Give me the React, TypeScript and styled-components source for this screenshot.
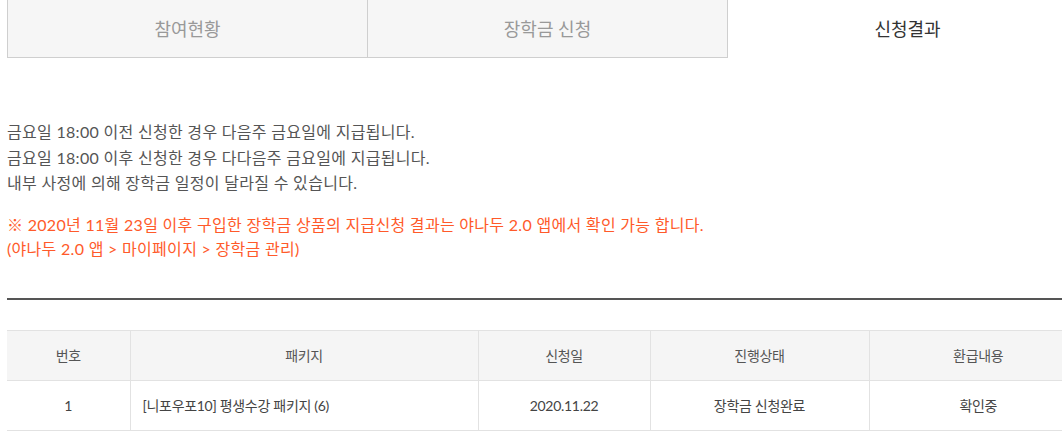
import React from "react";
import styled, { createGlobalStyle } from "styled-components";

const GlobalStyle = createGlobalStyle`
  html, body {
    margin: 0;
    padding: 0;
    background: #fff;
    overflow: hidden;
  }
  body {
    font-family: "Lato", "Noto Sans CJK KR", sans-serif;
    color: #555;
  }
`;

interface Row {
  no: number;
  pkg: string;
  date: string;
  status: string;
  refund: string;
}

const TABS = ["참여현황", "장학금 신청", "신청결과"];
const ACTIVE_TAB = 2;

const COLUMNS = [
  { label: "번호", width: 123 },
  { label: "패키지", width: 348 },
  { label: "신청일", width: 172 },
  { label: "진행상태", width: 219 },
  { label: "환급내용", width: 218 },
];

const ROWS: Row[] = [
  {
    no: 1,
    pkg: "[니포우포10] 평생수강 패키지 (6)",
    date: "2020.11.22",
    status: "장학금 신청완료",
    refund: "확인중",
  },
];

const App: React.FC = () => {
  return (
    <>
      <GlobalStyle />
      <Page>
        <TabBar>
          {TABS.map((tab, i) => (
            <Tab key={tab} active={i === ACTIVE_TAB} first={i === 0}>
              {tab}
            </Tab>
          ))}
        </TabBar>

        <Notice>
          <p>금요일 18:00 이전 신청한 경우 다음주 금요일에 지급됩니다.</p>
          <p>금요일 18:00 이후 신청한 경우 다다음주 금요일에 지급됩니다.</p>
          <p>내부 사정에 의해 장학금 일정이 달라질 수 있습니다.</p>
        </Notice>

        <Warning>
          <p>
            ※ 2020년 11월 23일 이후 구입한 장학금 상품의 지급신청 결과는 야나두 2.0 앱에서 확인 가능 합니다.
          </p>
          <p>(야나두 2.0 앱 &gt; 마이페이지 &gt; 장학금 관리)</p>
        </Warning>

        <Divider />

        <Table>
          <colgroup>
            {COLUMNS.map((c) => (
              <col key={c.label} style={{ width: c.width }} />
            ))}
          </colgroup>
          <thead>
            <tr>
              {COLUMNS.map((c) => (
                <HeadCell key={c.label}>{c.label}</HeadCell>
              ))}
            </tr>
          </thead>
          <tbody>
            {ROWS.map((row) => (
              <tr key={row.no}>
                <Cell>{row.no}</Cell>
                <Cell align="left">{row.pkg}</Cell>
                <Cell>{row.date}</Cell>
                <Cell>{row.status}</Cell>
                <Cell>{row.refund}</Cell>
              </tr>
            ))}
          </tbody>
        </Table>
      </Page>
    </>
  );
};

const Page = styled.div`
  width: 1080px;
  padding-left: 7px;
`;

const TabBar = styled.div`
  display: flex;
  height: 58px;
`;

const Tab = styled.div<{ active: boolean; first: boolean }>`
  flex: 1;
  display: flex;
  align-items: center;
  justify-content: center;
  padding-bottom: 2px;
  font-size: 18px;
  letter-spacing: 0;
  box-sizing: border-box;
  background: ${({ active }) => (active ? "#fff" : "#f6f6f6")};
  color: ${({ active }) => (active ? "#333" : "#999")};
  border-right: ${({ active }) => (active ? "none" : "1px solid #cfcfcf")};
  border-left: ${({ first }) => (first ? "1px solid #cfcfcf" : "none")};
  border-bottom: ${({ active }) => (active ? "none" : "1px solid #cfcfcf")};
`;

const Notice = styled.div`
  margin-top: 61px;
  font-size: 16px;
  line-height: 25.5px;
  color: #555;
  letter-spacing: 0.3px;

  p {
    margin: 0;
  }
`;

const Warning = styled.div`
  margin-top: 17px;
  font-size: 16px;
  line-height: 24px;
  color: #ff5a2a;
  letter-spacing: 0.3px;

  p {
    margin: 0;
  }
`;

const Divider = styled.div`
  margin-top: 37px;
  height: 2px;
  background: #555;
`;

const Table = styled.table`
  margin-top: 30px;
  width: 100%;
  border-collapse: collapse;
  table-layout: fixed;
  font-size: 14px;
  letter-spacing: -0.3px;
`;

const HeadCell = styled.th`
  height: 49px;
  padding: 0;
  font-weight: normal;
  color: #555;
  background: #f5f5f5;
  border-top: 1px solid #e2e2e2;
  border-bottom: 1px solid #e2e2e2;
  border-left: 1px solid #e2e2e2;
  text-align: center;

  &:first-child {
    border-left: none;
  }
`;

const Cell = styled.td<{ align?: string }>`
  height: 49px;
  padding: 0 ${({ align }) => (align === "left" ? "12px" : "0")};
  color: #444;
  text-align: ${({ align }) => align || "center"};
  border-bottom: 1px solid #e2e2e2;
  border-left: 1px solid #e2e2e2;

  &:first-child {
    border-left: none;
  }
`;

export default App;
